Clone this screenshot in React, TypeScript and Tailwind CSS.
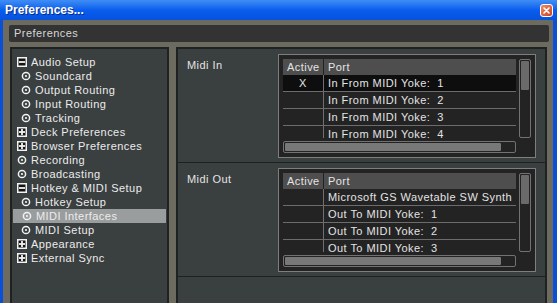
import React from "react";

type Node = { label: string; kind: "minus" | "plus" | "dot"; child?: boolean; active?: boolean };

const tree: Node[] = [
  { label: "Audio Setup", kind: "minus" },
  { label: "Soundcard", kind: "dot", child: true },
  { label: "Output Routing", kind: "dot", child: true },
  { label: "Input Routing", kind: "dot", child: true },
  { label: "Tracking", kind: "dot", child: true },
  { label: "Deck Preferences", kind: "plus" },
  { label: "Browser Preferences", kind: "plus" },
  { label: "Recording", kind: "dot" },
  { label: "Broadcasting", kind: "dot" },
  { label: "Hotkey & MIDI Setup", kind: "minus" },
  { label: "Hotkey Setup", kind: "dot", child: true },
  { label: "MIDI Interfaces", kind: "dot", child: true, active: true },
  { label: "MIDI Setup", kind: "dot", child: true },
  { label: "Appearance", kind: "plus" },
  { label: "External Sync", kind: "plus" },
];

function TreeIcon({ kind }: { kind: Node["kind"] }) {
  if (kind === "dot") {
    return (
      <svg width="10" height="10" viewBox="0 0 10 10">
        <circle cx="5" cy="5" r="3.6" fill="none" stroke="#f2f2f2" strokeWidth="1.5" />
        <circle cx="5" cy="5" r="1.1" fill="#f2f2f2" />
      </svg>
    );
  }
  return (
    <svg width="10" height="10" viewBox="0 0 10 10">
      <rect x="0.75" y="0.75" width="8.5" height="8.5" fill="#141414" stroke="#f2f2f2" strokeWidth="1.5" />
      <rect x="2" y="4.1" width="6" height="1.8" fill="#f2f2f2" />
      {kind === "plus" && <rect x="4.1" y="2" width="1.8" height="6" fill="#f2f2f2" />}
    </svg>
  );
}

function PortTable({ rows, selected }: { rows: string[]; selected?: number }) {
  return (
    <div className="w-[258px] border border-[#7e7e7e] bg-[#232323] p-[4px] flex flex-col gap-[3px]">
      <div className="flex gap-[3px] h-[79px]">
        <div className="w-[233px] h-full overflow-hidden flex flex-col">
          <div className="flex h-[16px] shrink-0 gap-[1px]">
            <div className="w-[40px] bg-[#4e4e4e] pl-[4px] leading-[16px]">Active</div>
            <div className="flex-1 bg-[#4e4e4e] pl-[4px] leading-[16px]">Port</div>
          </div>
          {rows.map((r, i) => (
            <div
              key={r}
              className={`flex h-[17px] shrink-0 border-b border-[#6c6c6c] ${i === selected ? "bg-[#0e0e0e]" : ""}`}
            >
              <div className="w-[40px] text-center leading-[16px]">{i === selected ? "X" : ""}</div>
              <div className="flex-1 border-l border-[#707070] pl-[4px] leading-[16px] whitespace-pre">{r}</div>
            </div>
          ))}
        </div>
        <div className="w-[12px] h-full border border-[#727272] rounded-[2px] p-[1px]">
          <div className="h-[29px] bg-[#6a6a6a] rounded-[1px]" />
        </div>
      </div>
      <div className="w-[233px] h-[12px] border border-[#727272] rounded-[2px] p-[1px]">
        <div className="w-[216px] h-full bg-[#787878] rounded-[1px]" />
      </div>
    </div>
  );
}

export default function App() {
  return (
    <div className="w-[557px] h-[303px] overflow-hidden flex flex-col bg-[#0a4fd8] font-['Liberation_Sans',Arial,sans-serif] text-[11px] tracking-[0.45px] text-[#e4e4e4]">
      <div className="h-[20px] shrink-0 flex items-center justify-between pl-[5px] pr-[4px] bg-linear-to-b from-[#3f8ef6] via-[#0a5ded] to-[#0652dc]">
        <span className="text-[12px] font-bold tracking-normal text-white [text-shadow:1px_1px_0_#0a2a8a]">Preferences...</span>
        <div className="w-[13px] h-[13px] rounded-[3px] border border-white bg-linear-to-br from-[#f08a6a] to-[#c8401e] flex items-center justify-center">
          <svg width="7" height="7" viewBox="0 0 7 7">
            <path d="M1 1L6 6M6 1L1 6" stroke="#fff" strokeWidth="1.6" strokeLinecap="round" />
          </svg>
        </div>
      </div>
      <div className="flex-1 flex flex-col bg-[#6d6b5f] ml-[3px] mr-[4px] pl-[6px] pr-[4px] pt-[5px] gap-[5px] min-h-0">
        <div className="h-[17px] shrink-0 rounded-[2px] bg-[#333333] pl-[5px] leading-[17px] text-[#d6d6d6]">Preferences</div>
        <div className="flex-1 flex gap-[7px] pl-[1px] pr-[2px] min-h-0">
          <div className="w-[159px] border-2 border-b-0 border-[#1f2222] bg-[#3a3f40] pt-[6px] flex flex-col">
            {tree.map((n) => (
              <div
                key={n.label}
                className={`h-[14px] flex items-center gap-[4px] ${n.child ? "pl-[9px]" : "pl-[5px]"} ${n.active ? "bg-[#9a9d9d] mx-[1px]" : ""}`}
              >
                <TreeIcon kind={n.kind} />
                <span className="whitespace-nowrap text-[#ececec]">{n.label}</span>
              </div>
            ))}
          </div>
          <div className="flex-1 border-2 border-b-0 border-[#1f2222] bg-[#3a3f40] flex flex-col">
            <div className="flex pt-[5px] pb-[4px] border-b border-[#1e2121]">
              <div className="w-[100px] pl-[9px] pt-[4px] leading-[14px]">Midi In</div>
              <PortTable
                rows={["In From MIDI Yoke:  1", "In From MIDI Yoke:  2", "In From MIDI Yoke:  3", "In From MIDI Yoke:  4"]}
                selected={0}
              />
            </div>
            <div className="flex pt-[5px] pb-[4px] border-b border-[#1e2121]">
              <div className="w-[100px] pl-[9px] pt-[4px] leading-[14px]">Midi Out</div>
              <PortTable
                rows={["Microsoft GS Wavetable SW Synth", "Out To MIDI Yoke:  1", "Out To MIDI Yoke:  2", "Out To MIDI Yoke:  3"]}
              />
            </div>
          </div>
        </div>
      </div>
    </div>
  );
}
